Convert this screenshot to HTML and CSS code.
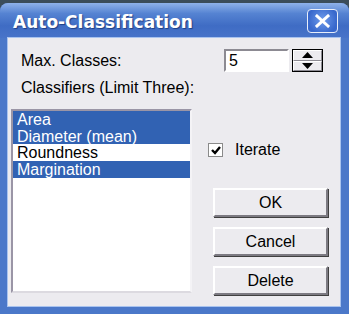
FILE: index.html
```html
<!DOCTYPE html>
<html lang="en">
<head>
    <meta charset="UTF-8">
    <title>Auto-Classification</title>
    <link rel="stylesheet" href="styles.css">
</head>
<body>
    <div class="window">
        <div class="titlebar">
            <span class="title">Auto-Classification</span>
            <button class="close">
                <svg width="15" height="14" viewBox="0 0 15 14">
                    <path d="M2 2 L13 12 M13 2 L2 12" stroke="#fff" stroke-width="3" stroke-linecap="square"/>
                </svg>
            </button>
        </div>
        <div class="client">
            <div class="row-max">
                <span class="label">Max. Classes:</span>
                <div class="spin-field">
                    <div class="field">5</div>
                    <div class="spin">
                        <div class="spin-btn">
                            <svg width="11" height="6" viewBox="0 0 11 6"><path d="M5.5 0 L11 6 L0 6 Z" fill="#000"/></svg>
                        </div>
                        <div class="spin-btn">
                            <svg width="11" height="6" viewBox="0 0 11 6"><path d="M0 0 L11 0 L5.5 6 Z" fill="#000"/></svg>
                        </div>
                    </div>
                </div>
            </div>
            <div class="label classifiers">Classifiers (Limit Three):</div>
            <div class="main">
                <ul class="listbox">
                    <li class="selected">Area</li>
                    <li class="selected">Diameter (mean)</li>
                    <li>Roundness</li>
                    <li class="selected">Margination</li>
                </ul>
                <div class="side">
                    <label class="check">
                        <span class="box">
                            <svg width="10" height="9" viewBox="0 0 10 9"><path d="M1 4 L4 7 L9 1" stroke="#000" stroke-width="2.4" fill="none"/></svg>
                        </span>
                        Iterate
                    </label>
                    <div class="buttons">
                        <button class="btn">OK</button>
                        <button class="btn">Cancel</button>
                        <button class="btn">Delete</button>
                    </div>
                </div>
            </div>
        </div>
    </div>
</body>
</html>
```

FILE: styles.css
```css
body {
    margin: 0;
    background: #3b4d5a;
    font-family: "Liberation Sans", Arial, sans-serif;
    font-size: 16px;
}
.window {
    margin-top: 3px;
    width: 349px;
    height: 311px;
    box-sizing: border-box;
    padding: 0 9px 8px 8px;
    background: #4b78c9;
    border-radius: 8px 8px 0 0;
    display: flex;
    flex-direction: column;
}
.titlebar {
    height: 35px;
    margin: 0 -9px 0 -8px;
    padding: 0 11px 0 13px;
    display: flex;
    align-items: center;
    justify-content: space-between;
    background: linear-gradient(#8fb2ea, #5583d2 30%, #3f6cc4 65%, #4874c9);
    border-radius: 8px 8px 0 0;
}
.title {
    font-family: "DejaVu Sans", sans-serif;
    font-weight: bold;
    font-size: 17px;
    color: #fff;
    padding-top: 2px;
    text-shadow: 1px 1px 1px #1f3f85;
}
.close {
    width: 31px;
    height: 24px;
    padding: 0;
    display: flex;
    align-items: center;
    justify-content: center;
    border: 1px solid #e8eefa;
    border-radius: 4px;
    background: radial-gradient(circle at 50% 45%, #6f9cec, #3868cc 75%);
}
.client {
    flex: 1;
    background: #ecebef;
    box-shadow: 0 0 0 1px #a9c3ee;
    padding: 11px 17px 0 3px;
    display: flex;
    flex-direction: column;
}
.row-max {
    display: flex;
    justify-content: space-between;
    align-items: center;
    height: 23px;
}
.label {
    padding-left: 10px;
    line-height: 18px;
    color: #000;
}
.classifiers {
    margin-top: 7px;
}
.spin-field {
    display: flex;
    gap: 3px;
}
.field {
    width: 65px;
    height: 23px;
    box-sizing: border-box;
    border: 2px solid;
    border-color: #8c8a92 #ffffff #ffffff #8c8a92;
    background: #fff;
    padding-left: 3px;
    line-height: 19px;
}
.spin {
    width: 31px;
    height: 23px;
    display: flex;
    flex-direction: column;
    border: 1px solid #000;
    box-sizing: border-box;
}
.spin-btn {
    flex: 1;
    display: flex;
    align-items: center;
    justify-content: center;
    background: #ecebef;
    border: 1px solid;
    border-color: #ffffff #8c8a92 #8c8a92 #ffffff;
}
.main {
    margin-top: 12px;
    display: flex;
}
.listbox {
    flex-shrink: 0;
    margin: 0;
    padding: 0;
    list-style: none;
    width: 181px;
    height: 184px;
    box-sizing: border-box;
    background: #fff;
    border: 2px solid;
    border-color: #9a95a6 #f4f3f6 #dcdae0 #9a95a6;
}
.listbox li {
    height: 16.7px;
    line-height: 17px;
    padding-left: 4px;
    color: #000;
    white-space: nowrap;
}
.listbox li.selected {
    background: #3162b3;
    color: #fff;
}
.side {
    flex-shrink: 0;
    margin-left: 16px;
    display: flex;
    flex-direction: column;
}
.check {
    margin-top: 34px;
    display: flex;
    align-items: center;
    gap: 12px;
    line-height: 14px;
}
.box {
    width: 15px;
    height: 14px;
    box-sizing: border-box;
    border: 1px solid #8a8a8a;
    background: #fff;
    display: flex;
    align-items: center;
    justify-content: center;
}
.buttons {
    margin-top: 31px;
    margin-left: 5px;
    display: flex;
    flex-direction: column;
    gap: 10px;
}
.btn {
    width: 115px;
    height: 29px;
    font-family: "Liberation Sans", Arial, sans-serif;
    font-size: 16px;
    color: #000;
    background: #ecebef;
    border: 2px solid;
    border-color: #ffffff #7c7a82 #7c7a82 #ffffff;
    box-shadow: 1px 1px 0 #404040;
    padding: 0;
}
```
